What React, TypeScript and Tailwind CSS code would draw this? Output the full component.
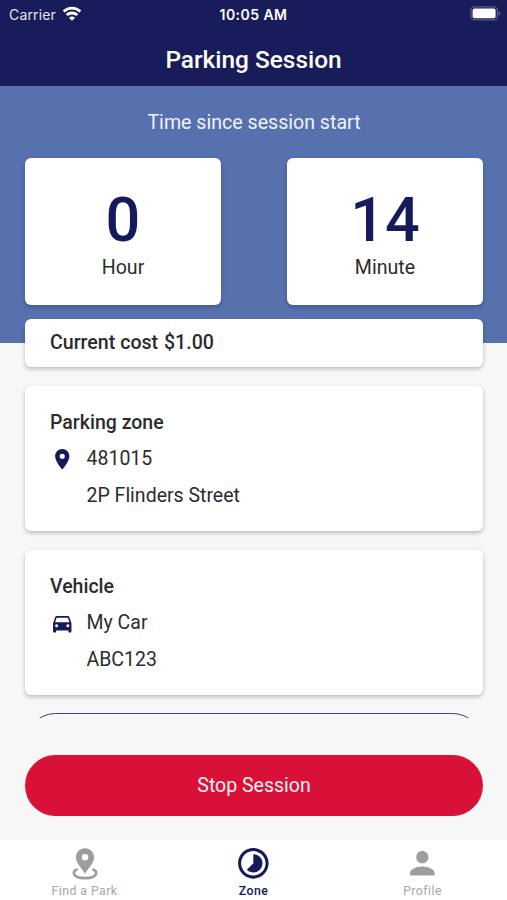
import React from 'react';
import { MdDirectionsCar, MdPerson, MdPlace, MdTimelapse } from 'react-icons/md';

const WifiIcon: React.FC = () => (
  <svg viewBox="0 0 20 15" className="w-[20px] h-[15px] mb-[2px]" fill="none" stroke="#fff" strokeWidth="2.8">
    <path d="M1.6 5.6C6.4 1 13.6 1 18.4 5.6" />
    <path d="M4.7 9.1C7.7 6.3 12.3 6.3 15.3 9.1" />
    <path d="M10 14.8L6.9 11.7C8.7 10.2 11.3 10.2 13.1 11.7Z" fill="#fff" stroke="none" />
  </svg>
);

const BatteryIcon: React.FC = () => (
  <svg viewBox="0 0 31 15" className="w-[31px] h-[15px] mb-[2px]">
    <rect x="0.9" y="0.9" width="26.6" height="13" rx="3.8" fill="none" stroke="#5b5c8c" strokeWidth="1.3" />
    <rect x="2.6" y="2.6" width="23" height="9.6" rx="1.8" fill="#fff" />
    <path d="M28.7 5.2C30.9 5.9 30.9 8.9 28.7 9.6Z" fill="#5b5c8c" />
  </svg>
);

const FindParkIcon: React.FC = () => (
  <svg viewBox="0 0 26 34" className="w-[26px] h-[34px]">
    <path
      d="M13 1.2C7.9 1.2 3.9 5.2 3.9 10.2C3.9 16.4 10 21.3 13 26.6C16 21.3 22.1 16.4 22.1 10.2C22.1 5.2 18.1 1.2 13 1.2ZM13 13.4A3.2 3.2 0 1 1 13 7A3.2 3.2 0 0 1 13 13.4Z"
      fill="#9d9d9d"
      fillRule="evenodd"
    />
    <path
      d="M5.6 22.3C2.7 23.2 1.7 24.9 1.9 26.4C2.4 29.3 7.1 31.1 13 31.1C18.9 31.1 23.6 29.3 24.1 26.4C24.3 24.9 23.3 23.2 20.4 22.3"
      fill="none"
      stroke="#9d9d9d"
      strokeWidth="2.7"
    />
  </svg>
);

const TimeCard: React.FC<{ value: number; label: string }> = ({ value, label }) => (
  <div className="w-[196px] h-[147px] bg-white rounded-[6px] shadow-[0_2px_4px_rgba(0,0,0,0.25)] flex flex-col items-center pt-[26px]">
    <span className="text-[61.2px] leading-[72px] font-medium text-[#151a5d]">{value}</span>
    <span className="text-[19.6px] leading-[24px]">{label}</span>
  </div>
);

interface DetailCardProps {
  title: string;
  icon: React.ReactNode;
  lines: string[];
}

const DetailCard: React.FC<DetailCardProps> = ({ title, icon, lines }) => (
  <section className="h-[145px] bg-white rounded-[6px] shadow-[0_2px_4px_rgba(0,0,0,0.25)] px-[25px] pt-[25px]">
    <h2 className="text-[19.5px] leading-[24px] font-medium">{title}</h2>
    <div className="flex mt-[12px]">
      <div className="w-[36.5px] text-[#151a5d]">{icon}</div>
      <div className="flex flex-col gap-[13px]">
        {lines.map((line) => (
          <span key={line} className="text-[19.5px] leading-[24px]">{line}</span>
        ))}
      </div>
    </div>
  </section>
);

const App: React.FC = () => {
  const tabs = [
    { label: 'Find a Park', icon: <FindParkIcon />, style: 'text-[#a6a6a6]' },
    { label: 'Zone', icon: <MdTimelapse className="size-[36.7px]" />, style: 'text-[#151a5d] font-medium' },
    { label: 'Profile', icon: <MdPerson className="size-[36.7px] text-[#9d9d9d]" />, style: 'text-[#a6a6a6]' },
  ];

  return (
    <div className="w-[507px] h-[900px] flex flex-col overflow-hidden bg-[#f7f7f7] text-[#2c2c2c] font-[Roboto,sans-serif]">
      <header className="h-[86px] shrink-0 bg-[#181c5a] text-white">
        <div className="h-[28px] grid grid-cols-3 items-center pl-[9px] pr-[6px] font-[Inter,sans-serif] text-[14px]">
          <div className="flex items-center gap-[6px]">
            <span className="text-[#e4e5f2] tracking-[0.15px]">Carrier</span>
            <WifiIcon />
          </div>
          <span className="text-center font-semibold text-[14px] tracking-[0.45px] mr-[3px]">10:05 AM</span>
          <div className="flex justify-end">
            <BatteryIcon />
          </div>
        </div>
        <h1 className="mt-[16px] text-center text-[24.4px] leading-[32px] font-medium">Parking Session</h1>
      </header>

      <section className="h-[257px] shrink-0 bg-[#5771af] pl-[25px] pr-[24px] pt-[25px]">
        <p className="text-center text-[19.6px] leading-[24px] text-[#eef3ff]">Time since session start</p>
        <div className="flex justify-between mt-[23px]">
          <TimeCard value={0} label="Hour" />
          <TimeCard value={14} label="Minute" />
        </div>
      </section>

      <main className="h-[399px] shrink-0 -mt-[24px] pl-[25px] pr-[24px] overflow-hidden flex flex-col">
        <div className="h-[48px] shrink-0 bg-white rounded-[6px] shadow-[0_2px_4px_rgba(0,0,0,0.25)] px-[25px] pt-[12px]">
          <span className="text-[19.6px] leading-[24px] font-medium block">
            Current cost <span className="ml-[1px]">$1.00</span>
          </span>
        </div>
        <div className="flex flex-col gap-[19px] mt-[19px]">
          <DetailCard title="Parking zone" icon={<MdPlace className="size-[24.5px]" />} lines={['481015', '2P Flinders Street']} />
          <DetailCard title="Vehicle" icon={<MdDirectionsCar className="size-[24.5px]" />} lines={['My Car', 'ABC123']} />
        </div>
        <div className="h-[61px] shrink-0 mt-[18px] rounded-full border-[1.5px] border-[#3b3f7d]"></div>
      </main>

      <div className="pl-[25px] pr-[24px] pt-[37px] pb-[24px]">
        <button className="w-full h-[61px] rounded-full bg-[#d91038] text-[#fff0f3] text-[19.5px] block">Stop Session</button>
      </div>

      <nav className="h-[60px] shrink-0 bg-white grid grid-cols-3">
        {tabs.map((tab) => (
          <div key={tab.label} className={`flex flex-col items-center pt-[4px] ${tab.style}`}>
            <div className="h-[39px] flex items-center justify-center">{tab.icon}</div>
            <span className="text-[12.3px] leading-[16px] tracking-[0.45px]">{tab.label}</span>
          </div>
        ))}
      </nav>
    </div>
  );
};

export default App;
